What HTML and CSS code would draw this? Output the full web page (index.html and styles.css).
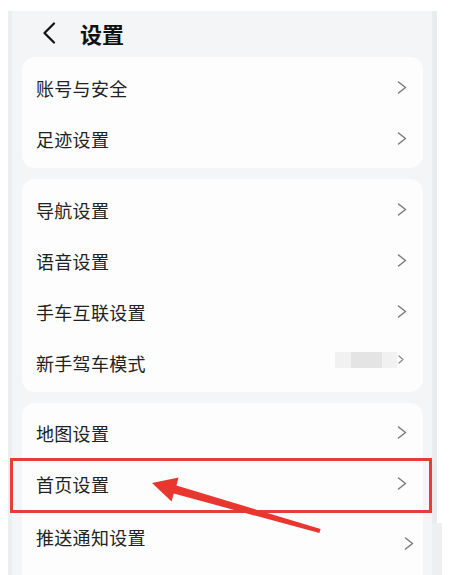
FILE: index.html
```html
<!DOCTYPE html>
<html lang="zh-CN">
<head>
<meta charset="utf-8">
<title>设置</title>
<link rel="stylesheet" href="styles.css">
</head>
<body>
<div class="page">
  <div class="panel">
    <header class="topbar">
      <svg class="back" width="14" height="22" viewBox="0 0 14 22"><path d="M12 1.5 L2.5 11 L12 20.5" fill="none" stroke="#111" stroke-width="2.2" stroke-linecap="round" stroke-linejoin="round"/></svg>
      <h1 class="title">设置</h1>
    </header>

    <section class="card">
      <div class="row"><span class="label">账号与安全</span><svg class="chev" width="10" height="13" viewBox="0 0 10 13"><path d="M1.5 1 L8.5 6.5 L1.5 12"/></svg></div>
      <div class="row"><span class="label">足迹设置</span><svg class="chev" width="10" height="13" viewBox="0 0 10 13"><path d="M1.5 1 L8.5 6.5 L1.5 12"/></svg></div>
    </section>

    <section class="card">
      <div class="row"><span class="label">导航设置</span><svg class="chev" width="10" height="13" viewBox="0 0 10 13"><path d="M1.5 1 L8.5 6.5 L1.5 12"/></svg></div>
      <div class="row"><span class="label">语音设置</span><svg class="chev" width="10" height="13" viewBox="0 0 10 13"><path d="M1.5 1 L8.5 6.5 L1.5 12"/></svg></div>
      <div class="row"><span class="label">手车互联设置</span><svg class="chev" width="10" height="13" viewBox="0 0 10 13"><path d="M1.5 1 L8.5 6.5 L1.5 12"/></svg></div>
      <div class="row"><span class="label">新手驾车模式</span><span class="blur"><span class="blur-in"></span></span><svg class="chev small" width="6" height="9" viewBox="0 0 6 9"><path d="M1 1 L5 4.5 L1 8"/></svg></div>
    </section>

    <section class="card last">
      <div class="row"><span class="label">地图设置</span><svg class="chev" width="10" height="13" viewBox="0 0 10 13"><path d="M1.5 1 L8.5 6.5 L1.5 12"/></svg></div>
      <div class="row"><span class="label">首页设置</span><svg class="chev" width="10" height="13" viewBox="0 0 10 13"><path d="M1.5 1 L8.5 6.5 L1.5 12"/></svg></div>
      <div class="row tall"><span class="label">推送通知设置</span><svg class="chev shifted" width="10" height="13" viewBox="0 0 10 13"><path d="M1.5 1 L8.5 6.5 L1.5 12"/></svg></div>
    </section>
  </div>
  <div class="strip"></div>

  <div class="highlight"></div>
  <svg class="arrow" width="461" height="575" viewBox="0 0 461 575">
    <polygon points="152,483 178.6,477.6 176.4,485.6 320.6,528.9 319.4,533.1 173.8,493.6 171.6,501.4" fill="#e8372f"/>
  </svg>
</div>
</body>
</html>
```

FILE: styles.css
```css
* { box-sizing: border-box; margin: 0; padding: 0; }

html, body {
  width: 461px;
  height: 575px;
  overflow: hidden;
  background: #ffffff;
}

body {
  font-family: "Noto Sans CJK SC", "Noto Sans", sans-serif;
  color: #222;
}

.page {
  position: relative;
  width: 461px;
  height: 575px;
  padding-top: 11px;
}

.panel {
  margin-left: 8px;
  width: 429px;
  height: 564px;
  background: #f4f5f7;
  border-left: 4px solid #eceef0;
  border-right: 5px solid #eaebed;
  padding: 0 9px 0 10px;
}

.topbar {
  display: flex;
  align-items: center;
  height: 46px;
  padding-left: 20px;
  padding-bottom: 2px;
}

.back {
  display: block;
}

.title {
  margin-left: 24px;
  font-size: 22px;
  font-weight: 700;
  color: #111;
  line-height: 1;
}

.card {
  background: #fdfdfd;
  border-radius: 13px;
  padding: 5px 0 4px;
  margin-bottom: 11px;
}

.card.last {
  padding-top: 4px;
  border-radius: 13px 13px 0 0;
  margin-bottom: 0;
}

.row {
  display: flex;
  align-items: center;
  height: 51px;
  padding: 0 16px 0 14px;
}

.row.tall {
  height: 64px;
  align-items: flex-start;
  padding-top: 19px;
}

.label {
  flex: 1;
  font-size: 18px;
  letter-spacing: 0.3px;
  line-height: 18px;
  color: #222;
}

.chev {
  display: block;
  fill: none;
  stroke: #7a7a7a;
  stroke-width: 1.5;
  stroke-linecap: round;
  stroke-linejoin: round;
}

.chev.small {
  stroke: #8a8a8a;
  stroke-width: 1.3;
  margin-left: 1px;
  margin-right: 3px;
  margin-top: -7px;
}

.chev.shifted {
  margin-top: 9px;
  margin-right: -7px;
}

.blur {
  display: flex;
  align-items: center;
  justify-content: center;
  width: 62px;
  height: 16px;
  background: #f1f1f1;
  margin-top: -6px;
}

.blur-in {
  display: block;
  width: 31px;
  height: 16px;
  background: #e4e4e4;
}

.strip {
  position: absolute;
  left: 432px;
  top: 523px;
  width: 10px;
  height: 52px;
  background: #eeeff1;
}

.highlight {
  position: absolute;
  left: 10px;
  top: 458px;
  width: 422px;
  height: 55px;
  border: 3px solid #e43d3a;
}

.arrow {
  position: absolute;
  left: 0;
  top: 0;
}
```
